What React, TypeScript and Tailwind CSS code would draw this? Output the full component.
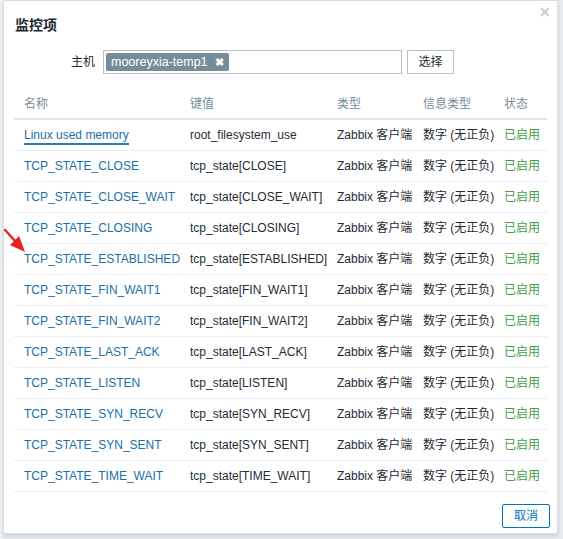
import React from "react";

const rows: [string, string][] = [
  ["Linux used memory", "root_filesystem_use"],
  ["TCP_STATE_CLOSE", "tcp_state[CLOSE]"],
  ["TCP_STATE_CLOSE_WAIT", "tcp_state[CLOSE_WAIT]"],
  ["TCP_STATE_CLOSING", "tcp_state[CLOSING]"],
  ["TCP_STATE_ESTABLISHED", "tcp_state[ESTABLISHED]"],
  ["TCP_STATE_FIN_WAIT1", "tcp_state[FIN_WAIT1]"],
  ["TCP_STATE_FIN_WAIT2", "tcp_state[FIN_WAIT2]"],
  ["TCP_STATE_LAST_ACK", "tcp_state[LAST_ACK]"],
  ["TCP_STATE_LISTEN", "tcp_state[LISTEN]"],
  ["TCP_STATE_SYN_RECV", "tcp_state[SYN_RECV]"],
  ["TCP_STATE_SYN_SENT", "tcp_state[SYN_SENT]"],
  ["TCP_STATE_TIME_WAIT", "tcp_state[TIME_WAIT]"],
];

const font = { fontFamily: '"Liberation Sans", Arial, "Noto Sans CJK SC", sans-serif' };

export default function App() {
  return (
    <div
      className="relative w-[563px] h-[539px] bg-[#e9ecee] overflow-hidden text-[12px] text-[#1f2c33]"
      style={font}
    >
      <div className="absolute left-0 top-0 w-[3px] h-full bg-[#f0f2f3]" />
      <div className="ml-[3px] w-[555px] h-[534px] bg-white border border-[#d6dce0] shadow-[0_2px_4px_rgba(0,0,0,0.12)] relative">
        <button className="absolute right-[6px] top-[4px] text-[#c9ced2] text-[14px] font-bold leading-none">
          ✕
        </button>
        <div className="pl-[11px] pt-[14px] h-[40px] text-[14px] text-[#1f2c33] font-semibold">监控项</div>
        <div className="flex items-center h-[24px] mt-[9px]">
          <div className="w-[99px] text-right pr-[8px] text-[#1f2c33]">主机</div>
          <div className="w-[299px] h-[24px] border border-[#b8c1c6] bg-white flex items-center pl-[2px]">
            <span className="h-[18px] bg-[#768d99] text-white text-[12.5px] flex items-center px-[5px] rounded-[2px] gap-[7px]">
              mooreyxia-temp1
              <span className="text-[11px] font-bold leading-none">✖</span>
            </span>
          </div>
          <button className="ml-[5px] w-[47px] h-[24px] border border-[#b8c1c6] bg-white text-[#1f2c33]">选择</button>
        </div>
        <div className="mx-[10px] mt-[15px]">
          <div className="grid grid-cols-[171px_147px_86px_81px_50px] h-[31px] items-center border-b-2 border-[#dfe4e7] text-[#768d99]">
            <div className="pl-[10px]">名称</div>
            <div className="pl-[5px]">键值</div>
            <div className="pl-[5px]">类型</div>
            <div className="pl-[5px]">信息类型</div>
            <div className="pl-[5px]">状态</div>
          </div>
          {rows.map(([n, k], i) => (
            <div
              key={n}
              className="grid grid-cols-[171px_147px_86px_81px_50px] h-[31px] items-center border-b border-[#ebeef0]"
            >
              <div className="pl-[10px] whitespace-nowrap">
                <span
                  className={
                    "text-[#1a6fa8] " +
                    (i === 0 ? "border-b-2 border-[#2b7bb9] pb-[1px]" : "")
                  }
                >
                  {n}
                </span>
              </div>
              <div className="pl-[5px] whitespace-nowrap">{k}</div>
              <div className="pl-[5px] whitespace-nowrap">Zabbix 客户端</div>
              <div className="pl-[5px] whitespace-nowrap">数字 (无正负)</div>
              <div className="pl-[5px] whitespace-nowrap text-[#429e47]">已启用</div>
            </div>
          ))}
        </div>
        <div className="flex justify-end pr-[7px] mt-[12px]">
          <button className="w-[48px] h-[24px] border border-[#0275b8] text-[#0275b8] bg-white rounded-[2px]">
            取消
          </button>
        </div>
      </div>
      <svg className="absolute left-[2px] top-[227px]" width="26" height="28" viewBox="0 0 26 28">
        <line x1="3" y1="3" x2="14" y2="15" stroke="#e8231f" strokeWidth="2.5" strokeLinecap="round" />
        <polygon points="23,25 8,18 17,9" fill="#e8231f" />
      </svg>
    </div>
  );
}
